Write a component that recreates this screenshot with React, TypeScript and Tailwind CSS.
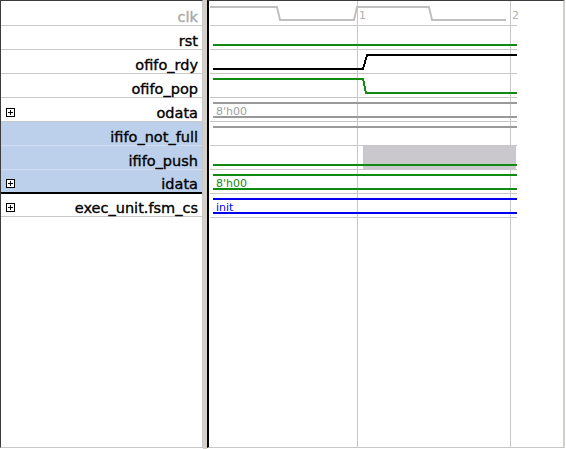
import React from 'react';

type Row = {
  name: string;
  bus?: boolean;
  selected?: boolean;
  muted?: boolean;
};

const rows: Row[] = [
  { name: 'clk', muted: true },
  { name: 'rst' },
  { name: 'ofifo_rdy' },
  { name: 'ofifo_pop' },
  { name: 'odata', bus: true },
  { name: 'ififo_not_full', selected: true },
  { name: 'ififo_push', selected: true },
  { name: 'idata', bus: true, selected: true },
  { name: 'exec_unit.fsm_cs', bus: true },
];

const GREEN = '#108a10';
const BLUE = '#0000ee';
const GRID = '#c8c8c8';

const PlusBox: React.FC = () => (
  <svg width="9" height="9" viewBox="0 0 9 9" shapeRendering="crispEdges" className="shrink-0">
    <rect x="0.5" y="0.5" width="8" height="8" fill="white" stroke="black" />
    <line x1="2" y1="4.5" x2="7" y2="4.5" stroke="black" />
    <line x1="4.5" y1="2" x2="4.5" y2="7" stroke="black" />
  </svg>
);

const SignalName: React.FC<{ row: Row; index: number }> = ({ row, index }) => {
  const height = index === 0 ? 'h-[25px]' : index === 8 ? 'h-[23px]' : 'h-[24px]';
  const border =
    index === 7
      ? 'border-b-2 border-black'
      : row.selected
        ? 'border-b border-[#d2ddef]'
        : 'border-b border-[#c8c8c8]';
  return (
    <div
      className={`flex items-end ${height} ${border} ${row.selected ? 'bg-[#bcd0ec]' : 'bg-white'}`}
    >
      {row.bus && (
        <div className="ml-[5px] mb-[4px]">
          <PlusBox />
        </div>
      )}
      <span
        className={`ml-auto pr-[4px] text-[14.5px] leading-[15px] [-webkit-text-stroke:0.35px] ${
          row.muted ? 'text-[#a8a8a8]' : 'text-black'
        }`}
      >
        {row.name}
      </span>
    </div>
  );
};

const Waves: React.FC = () => {
  const sep = [25, 49, 73, 97, 121, 145, 169, 193, 217];
  const x0 = 213;
  const x1 = 517;
  const label = "font-['DejaVu_Sans',sans-serif] text-[11px]";
  return (
    <svg
      width="354"
      height="446"
      viewBox="209 1 354 446"
      shapeRendering="crispEdges"
      className="block"
    >
      <rect x="363" y="146" width="153" height="23" fill="#cac8cc" />
      {sep.map((y) => (
        <line key={y} x1="210" y1={y + 0.5} x2={x1} y2={y + 0.5} stroke={GRID} />
      ))}
      <line x1="357.5" y1="1" x2="357.5" y2="447" stroke={GRID} />
      <line x1="510.5" y1="1" x2="510.5" y2="447" stroke={GRID} />

      {/* clk */}
      <polyline
        points="210,7 277,7 280,20 354,20 357,7 429,7 432,20 506,20"
        fill="none"
        stroke="#c0c0c0"
        strokeWidth="2"
        shapeRendering="auto"
      />
      <text x="359" y="19" fill="#b0b0b0" className={label}>1</text>
      <text x="512" y="19" fill="#b0b0b0" className={label}>2</text>

      {/* rst */}
      <line x1={x0} y1="45" x2={x1} y2="45" stroke={GREEN} strokeWidth="2" />

      {/* ofifo_rdy */}
      <polyline
        points={`${x0},69 363,69 367,55 ${x1},55`}
        fill="none"
        stroke="black"
        strokeWidth="2"
      />

      {/* ofifo_pop */}
      <polyline
        points={`${x0},79 363,79 366,93 ${x1},93`}
        fill="none"
        stroke={GREEN}
        strokeWidth="2"
      />

      {/* odata */}
      <line x1={x0} y1="103" x2={x1} y2="103" stroke="#999999" strokeWidth="2" />
      <line x1={x0} y1="117" x2={x1} y2="117" stroke="#999999" strokeWidth="2" />
      <text x="216" y="115" fill="#a0a0a0" className={label}>8'h00</text>

      {/* ififo_not_full */}
      <line x1={x0} y1="127" x2={x1} y2="127" stroke="#999999" strokeWidth="2" />

      {/* ififo_push */}
      <line x1={x0} y1="165" x2={x1} y2="165" stroke={GREEN} strokeWidth="2" />

      {/* idata */}
      <line x1={x0} y1="175" x2={x1} y2="175" stroke={GREEN} strokeWidth="2" />
      <line x1={x0} y1="189" x2={x1} y2="189" stroke={GREEN} strokeWidth="2" />
      <text x="216" y="187" fill={GREEN} className={label}>8'h00</text>

      {/* exec_unit.fsm_cs */}
      <line x1={x0} y1="199" x2={x1} y2="199" stroke={BLUE} strokeWidth="2" />
      <line x1={x0} y1="213" x2={x1} y2="213" stroke={BLUE} strokeWidth="2" />
      <text x="216" y="211" fill={BLUE} className={label}>init</text>
    </svg>
  );
};

export default function App() {
  return (
    <div className="flex h-[449px] w-[566px] bg-white font-['DejaVu_Sans','Liberation_Sans',sans-serif]">
      <div className="flex h-[448px] w-[203px] shrink-0 flex-col border-l border-t border-r border-b border-l-[#3c3c3c] border-t-[#3c3c3c] border-r-[#c8c8c8] border-b-[#c8c8c8]">
        {rows.map((row, i) => (
          <SignalName key={row.name} row={row} index={i} />
        ))}
      </div>
      <div className="w-[4px] shrink-0 bg-[#d4d0c8]" />
      <div className="h-[448px] w-[358px] shrink-0 border-l-2 border-t border-r-2 border-b border-l-black border-t-[#3c3c3c] border-r-[#d4d0c8] border-b-[#c8c8c8]">
        <Waves />
      </div>
    </div>
  );
}
